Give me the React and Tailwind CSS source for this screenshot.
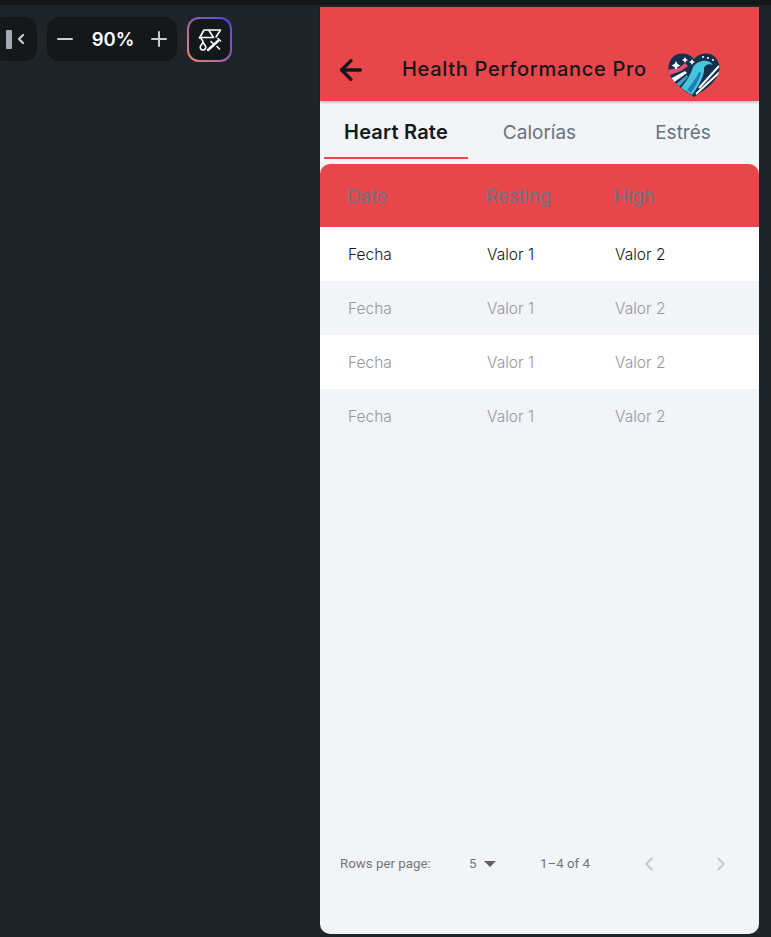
import { ArrowLeft, ChevronLeft, ChevronRight, Minus, Plus } from "lucide-react";

const rows = [
  { bg: "bg-white", text: "text-[#14181b]" },
  { bg: "bg-[#f2f4f8]", text: "text-[#95989c]" },
  { bg: "bg-white", text: "text-[#95989c]" },
  { bg: "bg-[#f2f4f8]", text: "text-[#95989c]" },
];

// small drawn version of the app logo
const HeartLogo = () => (
  <svg width="54" height="46" viewBox="0 0 54 46" className="shrink-0">
    <defs>
      <clipPath id="heart">
        <path d="M27 45 C20 40 7 33 2.500 22 C-1 12 5 2 14 1.500 C20 1 24.500 3.500 27 7.500 C29.500 3.500 34 1 40 1.500 C49 2 55 12 51.500 22 C47 33 34 40 27 45 Z" />
      </clipPath>
    </defs>
    <g clipPath="url(#heart)">
      <rect width="54" height="46" fill="#14304a" />
      <path d="M14 36 C20 28 24 22 26 15 C30 8 42 6 46 13 C42 11 37 13 37 17 C38 22 32 34 25 43 Z" fill="#46c4dc" />
      <path d="M20 38 C25 32 29 26 32 20 L34 21 C32 28 28 35 24 41 Z" fill="#1f7fb8" />
      <path d="M0 18 L12 16 L18 11 L21 14 L14 19 L0 24 Z" fill="#e8506d" />
      <path d="M3 27 L18 19 L20 21 L6 31 Z" fill="#f4f6f8" />
      <path d="M8 33 L20 23 L21 25 L11 36 Z" fill="#3f9fd0" />
      <path d="M29 42 L54 19 M33 44 L54 26 M32 36 L52 14" stroke="#f6f8fa" strokeWidth="2" fill="none" />
      <path d="M9 9 l1.500 3 3 1.500 -3 1.500 -1.500 3 -1.500 -3 -3 -1.500 3 -1.500 Z" fill="#fff" />
      <path d="M18 5 l1 2 2 1 -2 1 -1 2 -1 -2 -2 -1 2 -1 Z M25 7 l1 2 2 1 -2 1 -1 2 -1 -2 -2 -1 2 -1 Z" fill="#fff" />
      <circle cx="36" cy="5" r="1" fill="#fff" />
      <circle cx="41" cy="6" r="1" fill="#fff" />
      <circle cx="46" cy="8" r="1" fill="#fff" />
    </g>
  </svg>
);

const MagicIcon = () => (
  <svg width="24" height="24" viewBox="0 0 24 24" fill="none" stroke="#fff" strokeWidth="1.600" strokeLinejoin="round" strokeLinecap="round">
    <path d="M1.500 10 L6 2 H22.500 L18 9" />
    <path d="M11 2.500 L15.500 9.500 H1.500" />
    <path d="M3 10 C3 12 6 12 5 15" />
    <path d="M2.500 18 L5 14.500 L7.500 18 A2.800 2.800 0 1 1 2.500 18 Z" />
    <path d="M10 22 L20 13" strokeWidth="2.400" />
    <path d="M13 13.500 L15.500 16 M19 18.500 L21.500 21 M20 10.500 L22.500 13" />
  </svg>
);

export default function App() {
  return (
    <div className="h-[937px] w-[771px] overflow-hidden bg-[#1e2428] font-['Inter',sans-serif]">
      <div className="h-[5px] bg-[#14181b]" />
      <div className="flex h-[932px]">
        {/* toolbar */}
        <div className="flex w-[320px] shrink-0 items-start gap-[10px] pt-[12px]">
          <div className="-ml-[7px] flex h-[44px] w-[44px] items-center justify-center gap-[3px] rounded-[12px] bg-[#14181b] pl-[4px]">
            <span className="h-[19px] w-[6px] rounded-[1px] bg-[#a3acb5]" />
            <ChevronLeft size={16} strokeWidth={3.500} className="-ml-[2px] text-[#c3c8cd]" />
          </div>
          <div className="flex h-[44px] w-[130px] items-center justify-between rounded-[12px] bg-[#14181b] px-[6px]">
            <Minus size={24} strokeWidth={2} className="text-[#c9cdd1]" />
            <span className="mt-[1px] pl-[2px] text-[18.500px] font-semibold leading-none text-white">90%</span>
            <Plus size={24} strokeWidth={2} className="text-[#c9cdd1]" />
          </div>
          <div className="h-[45px] w-[45px] rounded-[12px] bg-gradient-to-tr from-[#ee8b60] via-[#9a5aa8] to-[#4b39ef] p-[2px]">
            <div className="flex h-full w-full items-center justify-center rounded-[10px] bg-[#14181b]">
              <MagicIcon />
            </div>
          </div>
        </div>

        {/* phone preview */}
        <div className="mt-[2px] flex h-[927px] w-[439px] shrink-0 flex-col rounded-b-[10px] bg-[#f2f4f8]">
          <div className="flex h-[94px] shrink-0 items-end bg-[#e7464b] pb-[9px] pl-[15px] shadow-[0_1px_3px_rgba(0,0,0,0.3)]">
            <div className="flex h-[44px] items-center">
              <ArrowLeft size={32} strokeWidth={2.500} className="text-[#14181b]" />
              <span className="ml-[35px] -mt-[2px] text-[20px] font-medium leading-none tracking-[0.7px] text-[#14181b]">
                Health Performance Pro
              </span>
              <div className="ml-[20px] mt-[9px]">
                <HeartLogo />
              </div>
            </div>
          </div>

          <div className="flex h-[58px] shrink-0 px-[4px]">
            <div className="flex w-[144px] items-center justify-center border-b-2 border-[#e7464b] pt-[5px] text-[20px] font-semibold tracking-[0.2px] text-[#14181b]">
              Heart Rate
            </div>
            <div className="flex w-[143px] items-center justify-center pt-[6px] text-[19px] text-[#677380]">
              Calorías
            </div>
            <div className="flex w-[144px] items-center justify-center pt-[6px] text-[19px] text-[#677380]">
              Estrés
            </div>
          </div>

          <div className="mt-[5px] flex h-[63px] shrink-0 items-center rounded-t-[10px] bg-[#e7464b] pt-[3px] text-[18.500px] text-[#6e7580]">
            <span className="w-[166px] pl-[27px]">Date</span>
            <span className="w-[128px]">Resting</span>
            <span>High</span>
          </div>

          {rows.map((row, i) => (
            <div key={i} className={`flex h-[54px] shrink-0 items-center pt-[2px] text-[15.500px] font-light ${row.bg} ${row.text}`}>
              <span className="w-[167px] pl-[28px]">Fecha</span>
              <span className="w-[128px]">Valor 1</span>
              <span>Valor 2</span>
            </div>
          ))}

          <div className="flex-1" />

          <div className="mb-[60px] flex h-[20px] shrink-0 items-center text-[13.300px] text-[#757575] font-['Roboto',sans-serif]">
            <span className="ml-[20px] w-[129px]">Rows per page:</span>
            <span className="w-[15px]">5</span>
            <span className="h-0 w-0 border-x-[6px] border-t-[6px] border-x-transparent border-t-[#616161]" />
            <span className="ml-[44px]">1–4 of 4</span>
            <ChevronLeft size={22} className="ml-[48px] text-[#c4c5c9]" />
            <ChevronRight size={22} className="ml-[50px] text-[#c4c5c9]" />
          </div>
        </div>
      </div>
    </div>
  );
}
